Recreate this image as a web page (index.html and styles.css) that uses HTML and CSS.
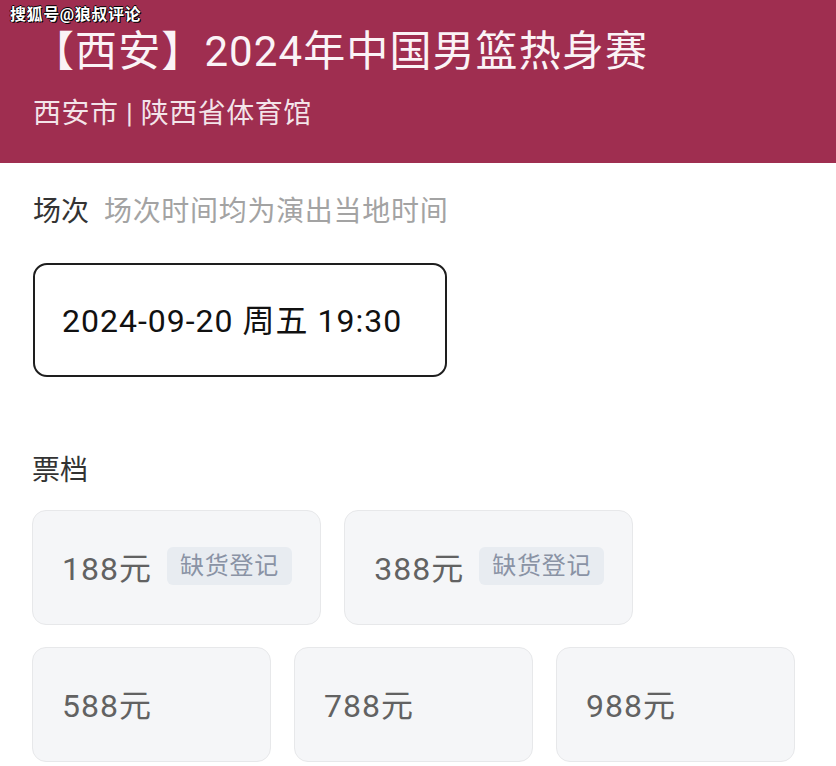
FILE: index.html
```
<!DOCTYPE html>
<html lang="zh">
<head>
  <meta charset="UTF-8" />
  <meta name="viewport" content="width=device-width, initial-scale=1.0"/>
  <title>【西安】2024年中国男篮热身赛</title>
  <link rel="stylesheet" href="styles.css">
</head>
<body>

  <div class="header">
    <div class="watermark">搜狐号@狼叔评论</div>
    <h1>【西安】2024年中国男篮热身赛</h1>
    <p class="venue">西安市 | 陕西省体育馆</p>
  </div>

  <div class="section">
    <div class="label">场次 <span class="hint">场次时间均为演出当地时间</span></div>
    <div class="session">2024-09-20 周五 19:30</div>
  </div>

  <div class="section tickets-section">
    <div class="label">票档</div>
    <div class="tickets">
      <div class="ticket"><span class="price">188元</span><span class="tag">缺货登记</span></div>
      <div class="ticket"><span class="price">388元</span><span class="tag">缺货登记</span></div>
      <div class="ticket"><span class="price">588元</span></div>
      <div class="ticket"><span class="price">788元</span></div>
      <div class="ticket"><span class="price">988元</span></div>
    </div>
  </div>

</body>
</html>
```

FILE: styles.css
```
body {
  margin: 0;
  font-family: Roboto, "Noto Sans CJK SC", sans-serif;
  background-color: #fff;
  color: #333;
  width: 836px;
  height: 766px;
  overflow: hidden;
}

.header {
  position: relative;
  background-color: #9f2e50;
  padding: 27px 0 31px 32px;
  color: #fff;
}

.watermark {
  position: absolute;
  left: 10px;
  top: 3px;
  font-size: 16px;
  letter-spacing: 0.6px;
  line-height: 24px;
  font-weight: bold;
  color: #fff;
  text-shadow: 1px 1px 0 #000, -1px 0 0 #000, 0 -1px 0 #000;
}

h1 {
  margin: 0;
  font-size: 42px;
  letter-spacing: 1.1px;
  line-height: 50px;
  font-weight: normal;
  color: #fbf3f6;
}

.venue {
  margin: 19px 0 0 1px;
  font-size: 28px;
  letter-spacing: 0.5px;
  line-height: 36px;
  color: rgba(255, 255, 255, 0.88);
}

.section {
  padding: 31px 0 0 33px;
}

.tickets-section {
  padding-top: 76px;
  padding-left: 32px;
}

.label {
  font-size: 28px;
  line-height: 36px;
  color: #333;
}

.hint {
  margin-left: 8px;
  letter-spacing: 0.7px;
  color: #a3a3a3;
}

.session {
  margin-top: 33px;
  width: 414px;
  height: 114px;
  box-sizing: border-box;
  border: 2px solid #1e1e1e;
  border-radius: 14px;
  padding: 0 0 4px 27px;
  display: flex;
  align-items: center;
  font-size: 32px;
  letter-spacing: 1px;
  color: #111;
}

.tickets {
  margin-top: 21px;
  display: flex;
  flex-wrap: wrap;
  gap: 22px 23px;
  width: 764px;
}

.ticket {
  min-width: 239px;
  height: 115px;
  box-sizing: border-box;
  padding: 0 28px 4px 29px;
  display: flex;
  align-items: center;
  gap: 15px;
  background-color: #f5f6f8;
  border: 1px solid #e7e8ea;
  border-radius: 14px;
}

.price {
  font-size: 32px;
  letter-spacing: 1px;
  color: #626262;
}

.tag {
  height: 38px;
  line-height: 38px;
  padding: 0 13px;
  border-radius: 6px;
  background-color: #e8ecf1;
  color: #8a93a5;
  font-size: 24px;
  letter-spacing: 0.8px;
}
```
